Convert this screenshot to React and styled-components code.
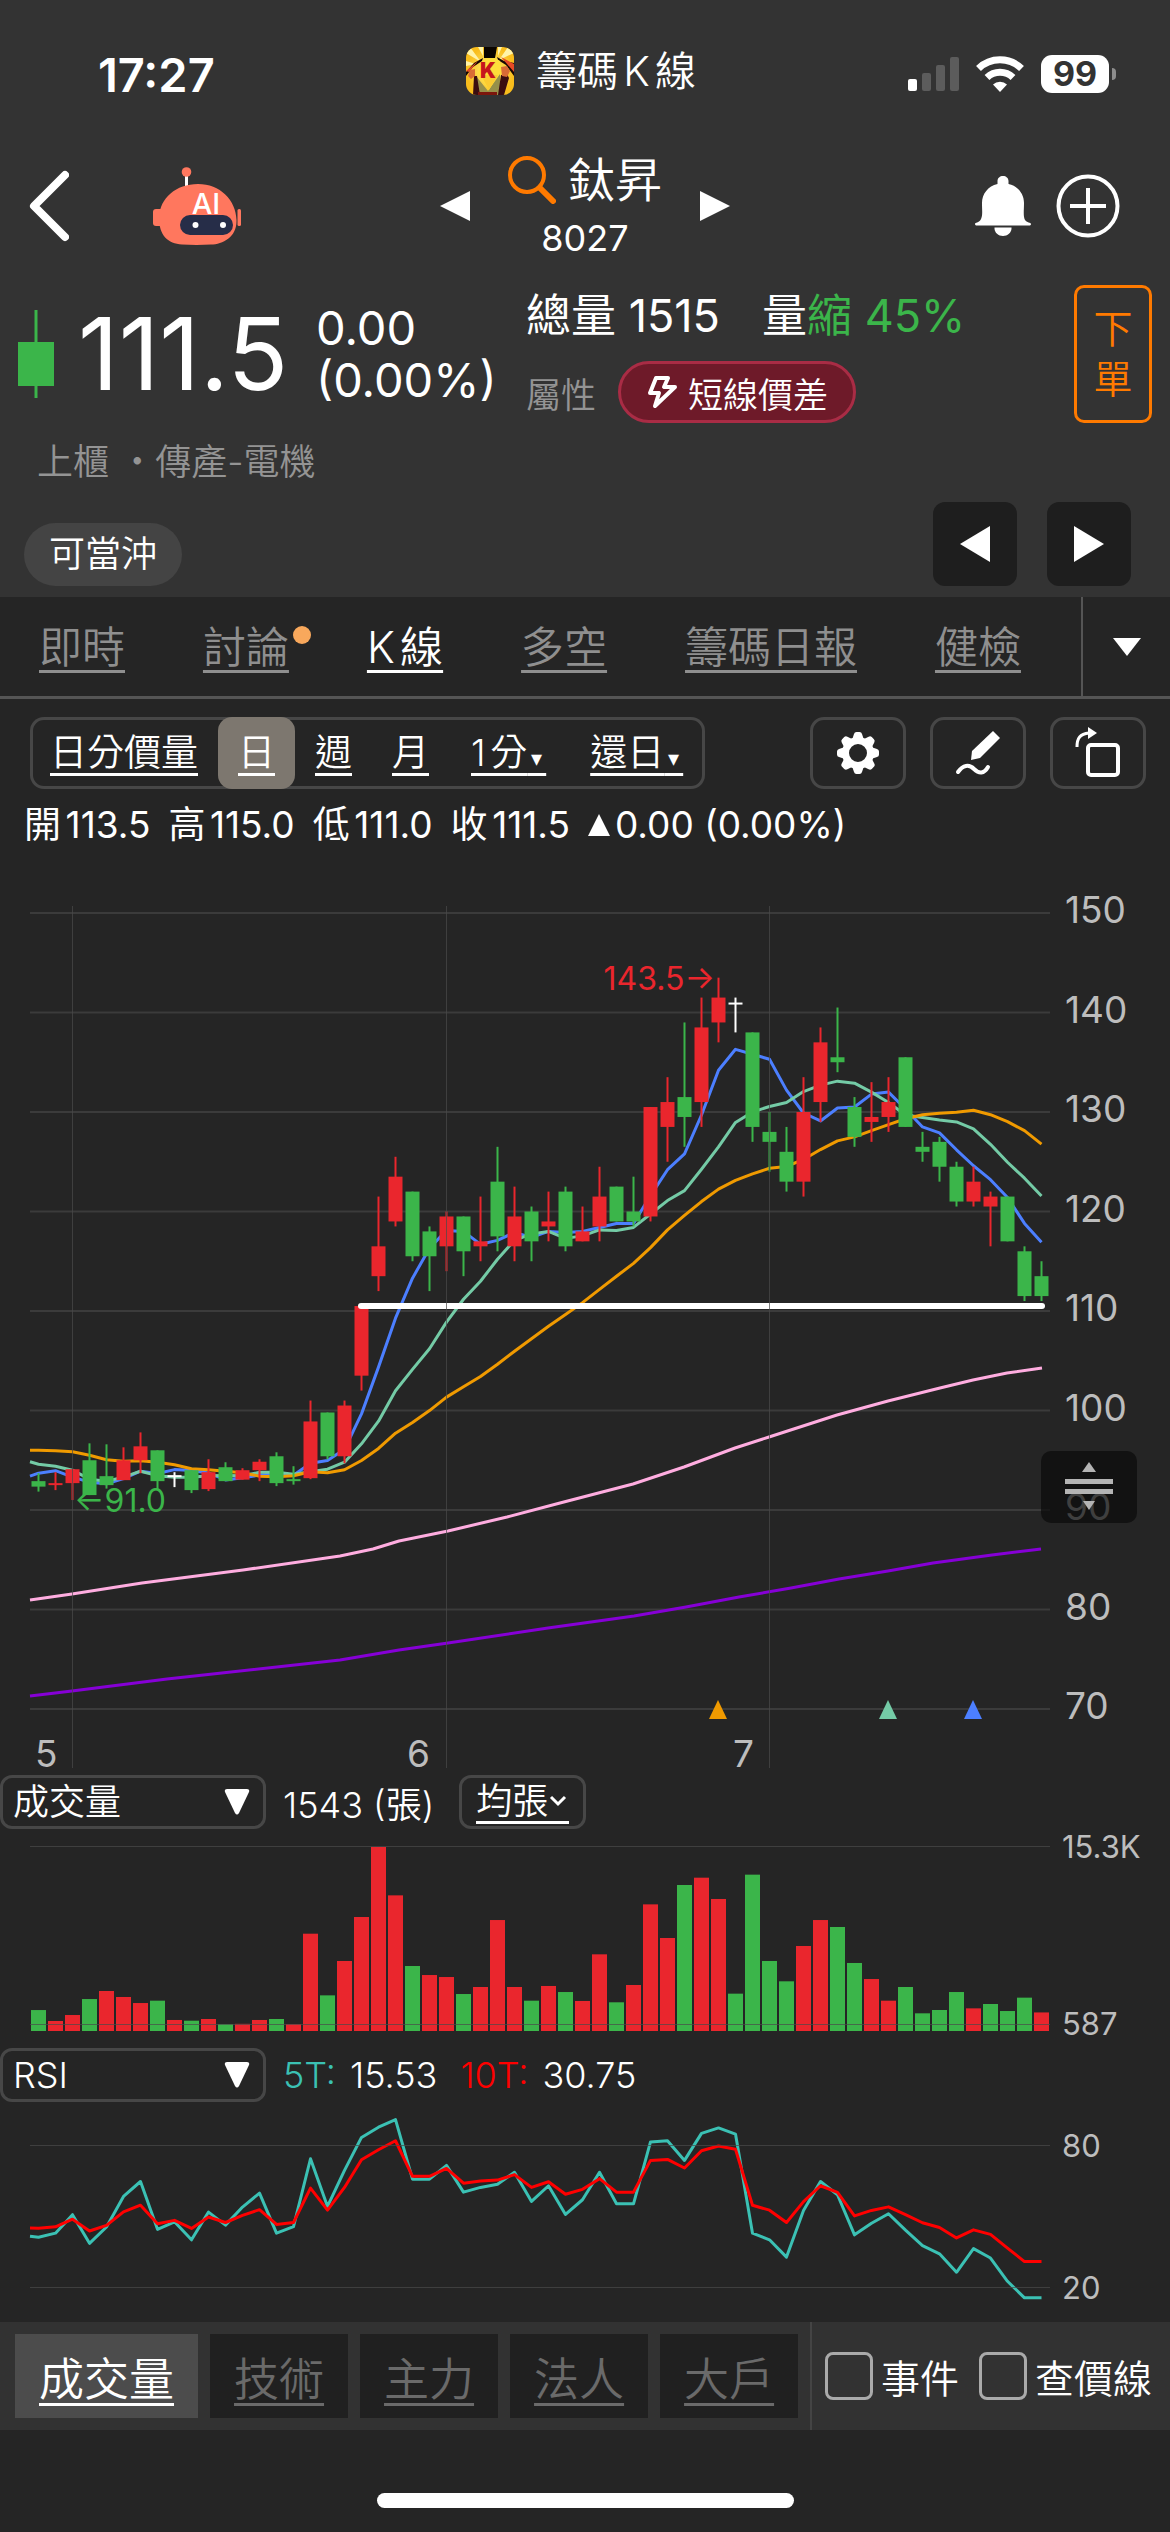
import React, { memo, useState } from 'react';
import styled, { createGlobalStyle } from 'styled-components';

const UP = '#ea262d';
const DOWN = '#3bb54a';
const FLAT = '#ffffff';

const GlobalStyle = createGlobalStyle`
  * {
    box-sizing: border-box;
  }

  body {
    margin: 0;
    background: #252525;
    color: #fff;
    font-family: Inter, 'Noto Sans CJK TC', sans-serif;
    font-weight: 350;
    text-autospace: normal;
  }

  button,
  select,
  input {
    font: inherit;
    color: inherit;
    margin: 0;
  }

  button {
    padding: 0;
    border: none;
    background: none;
    cursor: pointer;
  }

  svg {
    display: block;
    flex: none;
  }
`;

const Page = styled.main`
  min-height: 100vh;
  display: flex;
  flex-direction: column;
`;

const Top = styled.header`
  background: #333;
  padding-bottom: 11px;
`;

const StatusBar = styled.div`
  height: 148px;
  padding: 0 54px 0 98px;
  display: grid;
  grid-template-columns: 1fr auto 1fr;
  align-items: center;
`;

const Clock = styled.time`
  font-size: 47px;
  font-weight: 600;
`;

const AppName = styled.div`
  display: flex;
  align-items: center;
  gap: 22px;
  margin: 0 52px 6px 0;
  font-size: 41px;
  line-height: 48px;
`;

const StatusIcons = styled.div`
  display: flex;
  align-items: center;
  justify-content: flex-end;
  gap: 17px;
`;

const Battery = styled.div`
  display: flex;
  align-items: center;
  gap: 3px;

  span {
    width: 68px;
    height: 38px;
    border-radius: 11px;
    background: #fff;
    color: #333;
    font-size: 34px;
    font-weight: 700;
    line-height: 38px;
    text-align: center;
  }

  &::after {
    content: '';
    width: 4px;
    height: 12px;
    border-radius: 0 4px 4px 0;
    background: #8d8d8d;
  }
`;

const TitleBar = styled.div`
  height: 118px;
  padding: 0 50px 2px 29px;
  display: grid;
  grid-template-columns: 1fr auto 1fr;
  align-items: center;
`;

const TitleLeft = styled.div`
  display: flex;
  align-items: center;
  gap: 84px;
`;

const TitleCenter = styled.div`
  display: flex;
  align-items: center;
  margin-left: 21px;
`;

const TitleRight = styled.div`
  display: flex;
  align-items: center;
  justify-content: flex-end;
  gap: 24px;
`;

const StockTitle = styled.div`
  min-width: 230px;
  display: flex;
  flex-direction: column;
  align-items: center;
  gap: 8px;
`;

const StockName = styled.h1`
  margin: 0;
  display: flex;
  align-items: center;
  gap: 12px;
  font-size: 47px;
  line-height: 56px;
  font-weight: 350;
`;

const StockCode = styled.div`
  font-size: 36px;
  line-height: 44px;
  font-weight: 400;
`;

const Quote = styled.section`
  padding: 19px 18px 0;
  display: grid;
  grid-template-columns: 36px 238px 210px 1fr 78px;
  align-items: center;
`;

const Price = styled.div`
  padding-left: 24px;
  font-size: 100px;
  line-height: 100px;
  font-weight: 400;
`;

const Change = styled.div`
  padding-left: 24px;
  font-size: 47px;
  line-height: 52px;
  font-weight: 400;
`;

const Facts = styled.div`
  padding-left: 24px;
  display: flex;
  flex-direction: column;
  gap: 14px;
`;

const Volume = styled.div`
  display: flex;
  gap: 42px;
  font-size: 45px;
  line-height: 62px;
  font-weight: 400;
`;

const Shrink = styled.span`
  color: ${DOWN};
`;

const Trait = styled.div`
  display: flex;
  align-items: center;
  gap: 22px;
  font-size: 35px;
  color: #949494;
`;

const TraitTag = styled.span`
  height: 62px;
  padding: 0 25px;
  display: flex;
  align-items: center;
  gap: 10px;
  border: 3px solid #a92c45;
  border-radius: 31px;
  background: #6e1a29;
  color: #fff;
`;

const OrderButton = styled.button`
  height: 138px;
  padding: 0 16px;
  border: 3px solid #ff7a00;
  border-radius: 10px;
  color: #ff7a00;
  font-size: 39px;
  line-height: 50px;
`;

const Industry = styled.p`
  margin: 14px 0 0;
  padding-left: 37px;
  font-size: 36px;
  line-height: 50px;
  color: #949494;
`;

const TagRow = styled.div`
  margin-top: 15px;
  padding: 0 39px 0 24px;
  display: flex;
  align-items: flex-end;
  gap: 30px;
`;

const Tag = styled.span`
  height: 63px;
  padding: 0 25px;
  margin-right: auto;
  border-radius: 32px;
  background: #444;
  font-size: 36px;
  line-height: 63px;
`;

const StepButton = styled.button`
  width: 84px;
  height: 84px;
  display: grid;
  place-items: center;
  border-radius: 12px;
  background: #1e1e1e;
`;

const Tabs = styled.nav`
  height: 102px;
  display: flex;
  border-bottom: 3px solid #555;
`;

const TabList = styled.div`
  flex: 1;
  padding: 0 60px 0 39px;
  display: flex;
  align-items: center;
  justify-content: space-between;
`;

const Tab = styled.a`
  position: relative;
  color: ${({ $active }) => ($active ? '#fff' : '#8f8f8f')};
  font-size: 43px;
  line-height: 60px;
  text-decoration: underline 3px;
  text-decoration-skip-ink: none;
  text-underline-offset: 7px;
`;

const Dot = styled.span`
  position: absolute;
  top: 9px;
  right: -22px;
  width: 18px;
  height: 18px;
  border-radius: 50%;
  background: #f8a85c;
`;

const MoreTabs = styled.button`
  width: 89px;
  display: grid;
  place-items: center;
  border-left: 2px solid #555;
`;

const Toolbar = styled.div`
  padding: 18px 24px 0 30px;
  display: flex;
  gap: 24px;
`;

const Periods = styled.div`
  height: 72px;
  margin-right: auto;
  display: flex;
  border-radius: 14px;
  box-shadow: inset 0 0 0 3px #474747;
`;

const Period = styled.button`
  padding: 0 ${({ $menu }) => ($menu ? 22 : 20)}px;
  border-radius: 14px;
  background: ${({ $active }) => ($active ? '#7d776f' : 'transparent')};
  font-size: 37px;
  line-height: 72px;
  text-decoration: underline 3px;
  text-decoration-skip-ink: none;
  text-underline-offset: 7px;
`;

const Caret = styled.span`
  font-size: 22px;
`;

const ToolButton = styled.button`
  width: 96px;
  height: 72px;
  display: grid;
  place-items: center;
  border: 3px solid #474747;
  border-radius: 14px;
`;

const Ohlc = styled.div`
  padding: 11px 24px 0;
  display: flex;
  align-items: center;
  gap: 18px;
  font-size: 37px;
  line-height: 50px;
  font-weight: 400;
`;

const Diff = styled.span`
  display: flex;
  align-items: center;
  gap: 5px;
`;

const ChartBox = styled.section`
  position: relative;

  > svg {
    width: 100%;
    height: auto;
  }

  text {
    fill: #bdbdbd;
    font-size: 37px;
    font-weight: 400;
  }
`;

const SmallChart = styled(ChartBox)`
  text {
    font-size: 31px;
  }
`;

const DragHandle = styled.button`
  position: absolute;
  top: 65%;
  right: 33px;
  width: 96px;
  height: 72px;
  display: grid;
  place-items: center;
  border-radius: 10px;
  background: rgba(10, 10, 10, 0.7);
`;

const IndicatorBar = styled.div`
  height: 54px;
  display: flex;
  align-items: center;
  gap: 17px;
  font-size: 36px;
`;

const SelectBox = styled.label`
  width: 266px;
  height: 54px;
  display: grid;
  align-items: center;

  select,
  svg {
    grid-area: 1 / 1;
  }

  svg {
    justify-self: end;
    margin-right: 16px;
    pointer-events: none;
  }
`;

const Select = styled.select`
  width: 100%;
  height: 54px;
  padding: 0 10px;
  appearance: none;
  border: 3px solid #474747;
  border-radius: 12px;
  background: #252525;
`;

const AverageButton = styled.button`
  height: 54px;
  margin-left: 8px;
  padding: 0 14px;
  display: flex;
  align-items: center;
  border: 3px solid #474747;
  border-radius: 12px;

  span {
    display: flex;
    align-items: center;
    line-height: 40px;
    border-bottom: 3px solid #fff;
  }
`;

const Legend = styled.span`
  display: flex;
  gap: 14px;
  margin-right: 6px;

  b {
    color: ${({ $color }) => $color};
    font-weight: 350;
  }
`;

const BottomBar = styled.footer`
  height: 108px;
  display: flex;
  background: #323232;
`;

const Groups = styled.div`
  padding: 12px 12px 12px 15px;
  display: flex;
  gap: 12px;
  border-right: 2px solid #444;
`;

const GroupButton = styled.button`
  padding: 0 24px;
  background: ${({ $active }) => ($active ? '#4c4c4c' : '#202020')};
  color: ${({ $active }) => ($active ? '#fff' : '#6a6a6a')};
  font-size: 45px;
  text-decoration: underline 3px;
  text-decoration-skip-ink: none;
  text-underline-offset: 7px;
`;

const Options = styled.div`
  flex: 1;
  padding: 0 18px 0 13px;
  display: flex;
  align-items: center;
  justify-content: space-between;
`;

const Option = styled.label`
  display: flex;
  align-items: center;
  gap: 8px;
  font-size: 39px;

  input {
    width: 48px;
    height: 48px;
    appearance: none;
    border: 3px solid #aaa;
    border-radius: 8px;
  }

  input:checked {
    background: #aaa;
  }
`;

const HomeIndicator = styled.div`
  width: 417px;
  height: 15px;
  margin: auto auto 24px;
  border-radius: 8px;
  background: #fff;
`;

// open, close, high, low
const candles = [
  [92.9, 92.35, 93.7, 91.85], [92.6, 92.7, 93.8, 92], [92.7, 94.1, 94.1, 91], [95, 91.5, 96.7, 91.5],
  [93.4, 92.5, 96.6, 92.15], [93, 95, 96.3, 93], [95, 96.4, 97.8, 93.7], [96, 92.9, 96, 92],
  [93.5, 93.5, 93.8, 92.3], [94, 92, 94, 91.7], [92.1, 93.8, 95.1, 91.9], [94.3, 92.9, 94.8, 92.9],
  [93.05, 94, 94.2, 93.05], [94, 94.85, 95.1, 92.9], [95.4, 92.7, 95.8, 92.4], [93.1, 93, 94.4, 92.55],
  [93.2, 98.9, 101, 93.1], [99.8, 95.4, 99.8, 95.1], [95.4, 100.5, 101, 94.7], [103.5, 110.5, 110.5, 102],
  [113.5, 116.5, 121.5, 112], [119, 123.5, 125.5, 118.5], [122, 115.5, 122, 115], [118, 115.5, 118.5, 112],
  [116.5, 119.5, 120, 114], [119.5, 116, 119.5, 113.5], [116.5, 117, 121.5, 115], [123, 117.5, 126.5, 116],
  [116.5, 119.5, 122.5, 115], [120, 117, 120.5, 115], [118.5, 119, 122, 117], [122, 116.5, 122.5, 116],
  [117, 118, 120.5, 117], [118.5, 121.5, 124.5, 117], [122.5, 119, 122.5, 119], [120, 119, 123.5, 118.5],
  [119.5, 130.5, 130.5, 119], [128.5, 131, 133.5, 125], [131.5, 129.5, 139, 126.5], [131, 138.5, 141.5, 128.5],
  [139, 141.5, 143.5, 137], [141, 141, 141.5, 138], [138, 128.5, 138, 127], [128, 127, 130, 124],
  [126, 123, 128.5, 122], [123, 130, 133.5, 121.5], [131, 137, 138.5, 129], [135.5, 135, 140.5, 134],
  [130.5, 127.5, 131.5, 126.5], [129, 129.5, 133, 127], [129.5, 131, 133.5, 128], [135.5, 128.5, 135.5, 128.5],
  [126.5, 126, 128, 125], [127, 124.5, 127.5, 123], [124.5, 121, 125, 120.5], [121, 123, 124.5, 120.5],
  [120.5, 121.5, 122, 116.5], [121.5, 117, 121.5, 117], [116, 111.5, 116.5, 111], [113.5, 111.5, 115, 111]
];

const volumes = [
  1740, 835, 1330, 2650, 3315, 2820, 2320, 2515, 920, 860, 1000, 587, 600, 920, 1000, 587, 8050, 2955, 5795, 9430,
  15220, 11220, 5380, 4635, 4470, 3065, 3645, 9180, 3645, 2515, 3730, 3230, 2490, 6345, 2380, 3810, 10475, 7695,
  12075, 12680, 10920, 3095, 12930, 5795, 4115, 7035, 9180, 8605, 5630, 4305, 2515, 3645, 1470, 1745, 3230, 1880,
  2240, 1660, 2765, 1543
];

// r = closed above the previous day, g = below
const volumeSides = 'grrgrrrgrgrgrrgrrgrrrrgrrgrrrgrgrrgrrrgrrggggrrggrrggggrgggr';

const rsi5 = [
  41.1, 42.8, 50.6, 38.5, 45.4, 58.3, 64.6, 44.4, 47.6, 40, 51.7, 46.2, 53.8, 59.7, 42.8, 45.6, 74.2, 54.1, 69.3,
  83.2, 87.5, 90.7, 65.6, 65.6, 71.4, 60.1, 62.1, 63.4, 68.5, 56.2, 62.8, 50.7, 56.9, 68.5, 55.2, 55.2, 81.3, 81.8,
  73.5, 84.9, 87.2, 84.6, 42.8, 40, 32.7, 52.4, 64.6, 59, 42.1, 47, 51, 44.1, 37.5, 34.1, 26.3, 36.3, 32.3, 22.5,
  15.5, 15.5
];

const rsi10 = [
  44.9, 45.5, 48.7, 43.7, 46.1, 51.8, 54.6, 46.8, 48.2, 44.8, 49.6, 47.3, 50.3, 52.7, 46.5, 47.3, 61.8, 52.5, 62.1,
  73.8, 78, 81.8, 66.8, 66.8, 70.1, 63.9, 64.8, 65.2, 67.5, 62.1, 64.5, 59.2, 61.3, 65.8, 60.1, 60.1, 73.5, 73.9,
  70.3, 77.6, 79.6, 78.2, 54.6, 52.5, 47.3, 56.1, 62.8, 60, 50.1, 52.4, 53.9, 50.6, 47.2, 45.2, 40.8, 44.2, 42.3,
  36.5, 30.8, 30.8
];

const xAt = (i) => 38.5 + i * 17;
const priceY = (p) => 63 + (150 - p) * 9.95;
const volumeY = (v) => 195 - (v - 587) / 82.65;
const rsiY = (v) => 43 + (80 - v) * 2.37;

const toPoints = (values, scale, edge) =>
  `30,${scale(edge)} ` + values.map((v, i) => `${xAt(i)},${scale(v)}`).join(' ');

// The first n - 1 averages need days before the visible range, so they are passed in.
const movingAverage = (n, head) => {
  const out = [...head];
  for (let i = n - 1; i < candles.length; i++) {
    const days = candles.slice(i - n + 1, i + 1);
    out.push(days.reduce((sum, c) => sum + c[1], 0) / n);
  }
  return out;
};

const ma5 = movingAverage(5, [93.7, 93.95, 93.3, 92.8]);
const ma10 = movingAverage(10, [94.6, 94.4, 94, 93.1, 92.9, 93.3, 93.9, 93.45, 93.3]);
const ma20 = movingAverage(20, [
  96, 95.95, 95.85, 95.5, 95.05, 94.9, 94.95, 94.8, 94.55, 94.15, 94.05, 93.9, 93.75, 93.4, 93.35, 93.45, 93.85,
  93.75, 94.05
]);
const ma60 =
  '30,750 72,744 142,733 243,720 340,706 373,699 399,691 448,681 507,667 560,653 633,634 684,617 735,598 769,587 803,576 837,565 888,551 940,538 973,530 1007,523 1042,518';
const ma120 =
  '30,846 72,841 167,829 340,810 399,800 448,793 548,778 634,766 686,757 739,747 791,738 839,729 888,721 933,713 992,705 1041,699';

const candleColor = ([open, close]) => {
  if (open === close) return FLAT;
  return close > open ? UP : DOWN;
};

const Triangle = ({ dir, w, h }) => {
  const points = {
    left: `${w},0 0,${h / 2} ${w},${h}`,
    right: `0,0 ${w},${h / 2} 0,${h}`,
    down: `0,0 ${w},0 ${w / 2},${h}`,
    up: `0,${h} ${w},${h} ${w / 2},0`
  };
  return (
    <svg width={w} height={h} viewBox={`0 0 ${w} ${h}`} aria-hidden="true">
      <polygon points={points[dir]} fill="#fff" />
    </svg>
  );
};

const AppIcon = () => (
  <svg width="48" height="48" viewBox="0 0 48 48" aria-hidden="true">
    <defs>
      <clipPath id="appClip">
        <rect width="48" height="48" rx="11" />
      </clipPath>
      <radialGradient id="appGlow">
        <stop offset="0" stopColor="#fff27a" />
        <stop offset="1" stopColor="#f9bd1c" />
      </radialGradient>
    </defs>
    <g clipPath="url(#appClip)">
      <rect width="48" height="48" fill="url(#appGlow)" />
      <path d="M0 6l15 9L4 0zM48 6L33 13 42 0zM0 19l10-2-10-3zM12 0l5 9V0zM36 0l-4 9V0z" fill="#fff4a8" />
      <path d="M18 0h13l-2 11H18z" fill="#0b0500" />
      <path d="M17 11l-9 5-8 9v4l7-9 9-6zM31 10l7 4 10 2v13l-8-11-8-5z" fill="#190704" />
      <path d="M35 10l13 7v8zM12 14L0 24l3 1z" fill="#e64a26" />
      <path d="M16 14l5-3h8l5 3 2 12-12 19-12-19z" fill="#ffdd3a" />
      <path d="M10 29l12 15 12-17v21H9z" fill="#97904a" />
      <path d="M15 28l8 15 9-15z" fill="#fccb32" />
      <path d="M8 29l3 0 3 19H7zM35 28l6-1 2 4-5 17h-6z" fill="#3a0d10" />
      <path d="M4 23l5-1v7l-4 3-3-3zM35 20l6-1 3 5-3 6-5-1z" fill="#d96b35" />
      <path d="M12 45h19v3H12z" fill="#7c160c" />
      <text x="22" y="31" fontSize="21" fontWeight="900" textAnchor="middle" fill="#c6161c">
        K
      </text>
    </g>
  </svg>
);

const Signal = () => (
  <svg width="51" height="36" viewBox="0 0 51 36" aria-hidden="true">
    <rect y="23" width="9" height="12" rx="2" fill="#fff" />
    <g fill="#5c5c5c">
      <rect x="14" y="17" width="9" height="18" rx="2" />
      <rect x="28" y="9" width="9" height="26" rx="2" />
      <rect x="42" y="1" width="9" height="34" rx="2" />
    </g>
  </svg>
);

const Wifi = () => (
  <svg width="48" height="36" viewBox="0 0 48 36" aria-hidden="true">
    <g fill="none" stroke="#fff" strokeWidth="7">
      <path d="M2.500 12.500a31 31 0 0 1 43 0" />
      <path d="M11 21.500a19 19 0 0 1 26 0" />
    </g>
    <path d="M17 28.500a10 10 0 0 1 14 0L24 36z" fill="#fff" />
  </svg>
);

const BackIcon = () => (
  <svg width="40" height="72" viewBox="0 0 40 72" aria-hidden="true">
    <path d="M36 5L5 36l31 31" fill="none" stroke="#fff" strokeWidth="8" strokeLinecap="round" strokeLinejoin="round" />
  </svg>
);

const RobotIcon = () => (
  <svg width="89" height="78" viewBox="0 0 89 78" aria-hidden="true">
    <rect x="32" y="8" width="3" height="12" fill="#fff" />
    <g fill="#ff775e">
      <circle cx="33.500" cy="5" r="4.800" />
      <rect y="42" width="12" height="17" rx="3" />
      <rect x="84.500" y="42" width="3.500" height="17" rx="1.500" />
      <path d="M45 17c22 0 38 16 38.500 36C84 70 70 77 58 77.500c-9 .6-20 .6-29 0C15 76.500 6 69 6 50 7 31 23 17 45 17z" />
    </g>
    <text x="53" y="47" fontSize="29" fontWeight="500" textAnchor="middle" fill="#fff">
      AI
    </text>
    <rect x="27" y="48" width="53" height="20" rx="10" fill="#262d48" />
    <circle cx="42.500" cy="58" r="3" fill="#fff" />
    <circle cx="70" cy="58" r="3" fill="#fff" />
  </svg>
);

const SearchIcon = () => (
  <svg width="48" height="48" viewBox="0 0 48 48" aria-hidden="true">
    <circle cx="19" cy="19" r="17" fill="none" stroke="#ff7a00" strokeWidth="4" />
    <path d="M32 32l13 13" stroke="#ff7a00" strokeWidth="6" strokeLinecap="round" />
  </svg>
);

const BellIcon = () => (
  <svg width="58" height="60" viewBox="0 0 58 60" aria-hidden="true">
    <path
      d="M29 0c3 0 5.500 2 5.500 5v3C44 10 50 18 50 27c0 8-1 13 1 17 1.500 2.500 6 2.500 6 4 0 1-1 1.500-2 1.500H3c-1 0-2-.5-2-1.500 0-1.500 4-1.500 5.500-4C9 40 8 35 8 27c0-9 6-17 15.500-19V5c0-3 2.500-5 5.500-5zM20.500 51.500h17v1c0 4-4 7.500-8.500 7.500s-8.500-3.500-8.500-7.500z"
      fill="#fff"
    />
  </svg>
);

const PlusIcon = () => (
  <svg width="64" height="64" viewBox="0 0 64 64" aria-hidden="true">
    <g fill="none" stroke="#fff" strokeWidth="4">
      <circle cx="32" cy="32" r="29.500" />
      <path d="M32 14v36M14 32h36" />
    </g>
  </svg>
);

const CandleIcon = () => (
  <svg width="36" height="88" viewBox="0 0 36 88" aria-hidden="true">
    <path d="M18 0v88" stroke={DOWN} strokeWidth="3" />
    <rect y="32" width="36" height="44" fill={DOWN} />
  </svg>
);

const BoltIcon = () => (
  <svg width="32" height="34" viewBox="0 0 32 34" aria-hidden="true">
    <path d="M10 3h12l-4 9h11L9 31l4-13H4z" fill="none" stroke="#fff" strokeWidth="4" strokeLinejoin="round" />
  </svg>
);

const GearIcon = () => (
  <svg width="42" height="42" viewBox="0 0 42 42" aria-hidden="true">
    <circle cx="21" cy="21" r="12.500" fill="none" stroke="#fff" strokeWidth="7" />
    <g fill="#fff">
      {[0, 45, 90, 135, 180, 225, 270, 315].map((angle) => (
        <path key={angle} d="M15 8l2-6q.5-2 2.500-2h3q2 0 2.500 2l2 6z" transform={`rotate(${angle} 21 21)`} />
      ))}
    </g>
  </svg>
);

const PenIcon = () => (
  <svg width="46" height="46" viewBox="0 0 46 46" aria-hidden="true">
    <path d="M38 1l7 7-20 20-9 2 1-9z" fill="#fff" />
    <path
      d="M3 42c5-7 11-8 16-3s10 5 14-2"
      fill="none"
      stroke="#fff"
      strokeWidth="4"
      strokeLinecap="round"
    />
  </svg>
);

const RotateIcon = () => (
  <svg width="46" height="52" viewBox="0 0 46 52" aria-hidden="true">
    <rect x="13" y="18" width="30" height="30" rx="3" fill="none" stroke="#fff" strokeWidth="4" />
    <path d="M2 20C2 11 5 7 14 6" fill="none" stroke="#fff" strokeWidth="3" />
    <path d="M13 0l9 6-9 6z" fill="#fff" />
  </svg>
);

const HandleIcon = () => (
  <svg width="48" height="52" viewBox="0 0 48 52" aria-hidden="true">
    <g fill="#b4b4b4">
      <path d="M24 1l7 10H17z" />
      <rect y="18" width="48" height="5" />
      <rect y="28" width="48" height="5" />
      <path d="M24 49l-6-9h12z" />
    </g>
  </svg>
);

const SelectArrow = () => (
  <svg width="26" height="26" viewBox="0 0 26 26" aria-hidden="true">
    <path d="M3 0h20q3 0 2 3L15 24q-2 3-4 0L1 3q-1-3 2-3z" fill="#fff" />
  </svg>
);

const PriceChart = memo(() => (
  <svg viewBox="0 0 1170 925" role="img" aria-label="K線圖">
    {[150, 140, 130, 120, 110, 100, 90, 80, 70].map((p) => (
      <g key={p}>
        <path d={`M30 ${priceY(p)}H1050`} stroke="#3b3b3b" strokeWidth="2" />
        <text x="1065" y={priceY(p) + 10}>
          {p}
        </text>
      </g>
    ))}
    <g fill="none" strokeWidth="3" strokeLinejoin="round">
      <polyline points={ma120} stroke="#8600d6" />
      <polyline points={ma60} stroke="#ffade0" />
      <polyline points={toPoints(ma5, priceY, 93.4)} stroke="#4c7fff" />
      <polyline points={toPoints(ma10, priceY, 94.85)} stroke="#74cba6" />
      <polyline points={toPoints(ma20, priceY, 96)} stroke="#f09a00" />
    </g>
    {candles.map((candle, i) => {
      const [open, close, high, low] = candle;
      const color = candleColor(candle);
      const top = priceY(Math.max(open, close));
      return (
        <g key={i} fill={color}>
          <rect x={xAt(i) - 1} y={priceY(high)} width="2" height={priceY(low) - priceY(high)} />
          <rect x={xAt(i) - 7} y={top} width="14" height={Math.max(2, Math.abs(open - close) * 9.95)} />
        </g>
      );
    })}
    <path d="M361 456H1042" stroke="#fff" strokeWidth="6" strokeLinecap="round" />
    <path d="M72.500 56V918M446.500 56V918M769.500 56V918" stroke="#4a4a4a" strokeOpacity="0.7" />
    <text x="715" y="140" textAnchor="end" style={{ fill: UP, fontSize: 32 }}>
      143.5→
    </text>
    <text x="74" y="662" style={{ fill: DOWN, fontSize: 32 }}>
      ←91.0
    </text>
    <path d="M718 850l9 19h-18z" fill="#f09a00" />
    <path d="M888 850l9 19h-18z" fill="#74cba6" />
    <path d="M973 850l9 19h-18z" fill="#4c7fff" />
    <text x="35" y="917">5</text>
    <text x="407" y="917">6</text>
    <text x="733" y="917">7</text>
  </svg>
));

const VolumeChart = memo(() => (
  <svg viewBox="0 0 1170 219" role="img" aria-label="成交量">
    {volumes.map((v, i) => (
      <rect
        key={i}
        x={xAt(i) - 7.5}
        y={volumeY(v)}
        width="15"
        height={202 - volumeY(v)}
        fill={volumeSides[i] === 'r' ? UP : DOWN}
      />
    ))}
    <path d="M30 17.500H1050M30 195.500H1050" stroke="#4a4a4a" strokeOpacity="0.7" />
    <text x="1062" y="29">15.3K</text>
    <text x="1062" y="206">587</text>
  </svg>
));

const RsiChart = memo(() => (
  <svg viewBox="0 0 1170 220" role="img" aria-label="RSI">
    <g fill="none" strokeWidth="3" strokeLinejoin="round">
      <polyline points={toPoints(rsi5, rsiY, 41.5)} stroke="#3bc1b4" />
      <polyline points={toPoints(rsi10, rsiY, 45)} stroke="#ff0000" />
    </g>
    <path d="M30 43.500H1050M30 185.500H1050" stroke="#4a4a4a" strokeOpacity="0.7" />
    <text x="1062" y="55">80</text>
    <text x="1062" y="197">20</text>
  </svg>
));

const tabs = [
  { label: '即時' },
  { label: '討論', dot: true },
  { label: 'K線' },
  { label: '多空' },
  { label: '籌碼日報' },
  { label: '健檢' }
];

const periods = [
  { label: '日分價量' },
  { label: '日' },
  { label: '週' },
  { label: '月' },
  { label: '1分', menu: true },
  { label: '還日', menu: true }
];

const groups = ['成交量', '技術', '主力', '法人', '大戶'];

const App = () => {
  const [tab, setTab] = useState('K線');
  const [period, setPeriod] = useState('日');
  const [group, setGroup] = useState('成交量');

  return (
    <Page>
      <GlobalStyle />
      <Top>
        <StatusBar>
          <Clock>17:27</Clock>
          <AppName>
            <AppIcon />
            籌碼K線
          </AppName>
          <StatusIcons>
            <Signal />
            <Wifi />
            <Battery>
              <span>99</span>
            </Battery>
          </StatusIcons>
        </StatusBar>

        <TitleBar>
          <TitleLeft>
            <button aria-label="返回">
              <BackIcon />
            </button>
            <button aria-label="AI 助理">
              <RobotIcon />
            </button>
          </TitleLeft>
          <TitleCenter>
            <button aria-label="上一檔">
              <Triangle dir="left" w={30} h={30} />
            </button>
            <StockTitle>
              <StockName>
                <SearchIcon />
                鈦昇
              </StockName>
              <StockCode>8027</StockCode>
            </StockTitle>
            <button aria-label="下一檔">
              <Triangle dir="right" w={30} h={30} />
            </button>
          </TitleCenter>
          <TitleRight>
            <button aria-label="通知">
              <BellIcon />
            </button>
            <button aria-label="加入自選">
              <PlusIcon />
            </button>
          </TitleRight>
        </TitleBar>

        <Quote>
          <CandleIcon />
          <Price>111.5</Price>
          <Change>
            0.00
            <br />
            (0.00%)
          </Change>
          <Facts>
            <Volume>
              <span>總量 1515</span>
              <span>
                量<Shrink>縮 45%</Shrink>
              </span>
            </Volume>
            <Trait>
              屬性
              <TraitTag>
                <BoltIcon />
                短線價差
              </TraitTag>
            </Trait>
          </Facts>
          <OrderButton>下單</OrderButton>
        </Quote>
        <Industry>上櫃 ・傳產-電機</Industry>
        <TagRow>
          <Tag>可當沖</Tag>
          <StepButton aria-label="前一日">
            <Triangle dir="left" w={30} h={36} />
          </StepButton>
          <StepButton aria-label="後一日">
            <Triangle dir="right" w={30} h={36} />
          </StepButton>
        </TagRow>
      </Top>

      <Tabs>
        <TabList>
          {tabs.map(({ label, dot }) => (
            <Tab key={label} href="#" $active={tab === label} onClick={() => setTab(label)}>
              {label}
              {dot && <Dot />}
            </Tab>
          ))}
        </TabList>
        <MoreTabs aria-label="更多">
          <Triangle dir="down" w={28} h={18} />
        </MoreTabs>
      </Tabs>

      <Toolbar>
        <Periods>
          {periods.map(({ label, menu }) => (
            <Period key={label} $active={period === label} $menu={menu} onClick={() => setPeriod(label)}>
              {label}
              {menu && <Caret>{'\u2009▾\u2009'}</Caret>}
            </Period>
          ))}
        </Periods>
        <ToolButton aria-label="設定">
          <GearIcon />
        </ToolButton>
        <ToolButton aria-label="畫線">
          <PenIcon />
        </ToolButton>
        <ToolButton aria-label="旋轉">
          <RotateIcon />
        </ToolButton>
      </Toolbar>

      <Ohlc>
        <span>開113.5</span>
        <span>高115.0</span>
        <span>低111.0</span>
        <span>收111.5</span>
        <Diff>
          <Triangle dir="up" w={22} h={22} />
          0.00 (0.00%)
        </Diff>
      </Ohlc>

      <ChartBox>
        <PriceChart />
        <DragHandle aria-label="調整高度">
          <HandleIcon />
        </DragHandle>
      </ChartBox>

      <IndicatorBar>
        <SelectBox>
          <Select aria-label="副圖一" defaultValue="成交量">
            <option>成交量</option>
            <option>RSI</option>
          </Select>
          <SelectArrow />
        </SelectBox>
        <span>1543 (張)</span>
        <AverageButton>
          <span>
            均張
            <svg width="21" height="14" viewBox="0 0 21 14" aria-hidden="true">
              <path d="M3 3l7 7 7-7" fill="none" stroke="#fff" strokeWidth="3" />
            </svg>
          </span>
        </AverageButton>
      </IndicatorBar>
      <SmallChart>
        <VolumeChart />
      </SmallChart>

      <IndicatorBar>
        <SelectBox>
          <Select aria-label="副圖二" defaultValue="RSI">
            <option>成交量</option>
            <option>RSI</option>
          </Select>
          <SelectArrow />
        </SelectBox>
        <Legend $color="#3bc1b4">
          <b>5T:</b>15.53
        </Legend>
        <Legend $color="#ff0000">
          <b>10T:</b>30.75
        </Legend>
      </IndicatorBar>
      <SmallChart>
        <RsiChart />
      </SmallChart>

      <BottomBar>
        <Groups>
          {groups.map((label) => (
            <GroupButton key={label} $active={group === label} onClick={() => setGroup(label)}>
              {label}
            </GroupButton>
          ))}
        </Groups>
        <Options>
          <Option>
            <input type="checkbox" />
            事件
          </Option>
          <Option>
            <input type="checkbox" />
            查價線
          </Option>
        </Options>
      </BottomBar>
      <HomeIndicator />
    </Page>
  );
};

export default App;
